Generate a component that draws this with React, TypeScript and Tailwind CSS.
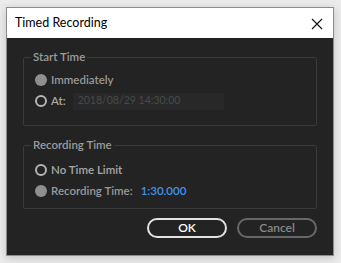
import React from "react";

function Radio({ checked }: { checked: boolean }) {
  return checked ? (
    <span className="w-[12px] h-[12px] rounded-full bg-[#8f8f8f] shrink-0" />
  ) : (
    <span className="w-[12px] h-[12px] rounded-full border-2 border-[#b4b4b4] shrink-0" />
  );
}

export default function App() {
  return (
    <div
      className="w-[341px] h-[263px] bg-[#ebebeb] pt-[7px] pl-[6px] overflow-hidden"
      style={{ fontFamily: 'Lato, "Open Sans", sans-serif' }}
    >
      <div className="w-[328px] h-[249px] flex flex-col border border-[#8c8c8c] shadow-[0_2px_8px_rgba(0,0,0,0.18)]">
        {/* Title bar */}
        <div className="h-[30px] bg-white flex items-center justify-between pl-[8px] pr-[10px] shrink-0">
          <span className="text-[12.5px] text-black">Timed Recording</span>
          <svg width="12" height="12" viewBox="0 0 12 12" className="mt-[1px]">
            <path d="M1 1 L11 11 M11 1 L1 11" stroke="#111" strokeWidth="1.1" />
          </svg>
        </div>

        {/* Body */}
        <div className="flex-1 bg-[#232323] px-[16px] pt-[12px] flex flex-col">
          <fieldset className="border border-[#3a3a3a] rounded-[2px] px-[11px] pt-[6px] pb-[13px]">
            <legend className="px-[2px] ml-[-4px] text-[11.5px] leading-[14px] text-[#9c9c9c] font-semibold">
              Start Time
            </legend>
            <div className="flex flex-col">
              <div className="h-[20px] flex items-center gap-[4px]">
                <Radio checked />
                <span className="text-[11.5px] font-semibold text-[#9a9a9a]">Immediately</span>
              </div>
              <div className="h-[22px] flex items-center gap-[4px]">
                <Radio checked={false} />
                <span className="text-[11.5px] font-semibold text-[#a8a8a8]">At:</span>
                <div className="ml-[3px] w-[151px] h-[17px] bg-[#282828] flex items-center pl-[5px]">
                  <span className="text-[10.5px] text-[#4a4a4a]">2018/08/29 14:30:00</span>
                </div>
              </div>
            </div>
          </fieldset>

          <fieldset className="mt-[12px] border border-[#3a3a3a] rounded-[2px] px-[11px] pt-[7px] pb-[7px]">
            <legend className="px-[2px] ml-[-4px] text-[11.5px] leading-[14px] text-[#9c9c9c] font-semibold">
              Recording Time
            </legend>
            <div className="flex flex-col">
              <div className="h-[21px] flex items-center gap-[4px]">
                <Radio checked={false} />
                <span className="text-[11.5px] font-semibold text-[#a8a8a8]">No Time Limit</span>
              </div>
              <div className="h-[21px] flex items-center gap-[4px]">
                <Radio checked />
                <span className="text-[11.5px] font-semibold text-[#9a9a9a]">Recording Time:</span>
                <span className="ml-[4px] text-[11.5px] font-semibold text-[#4193ea]">1:30.000</span>
              </div>
            </div>
          </fieldset>

          <div className="mt-[9px] flex justify-end gap-[10px]">
            <button className="w-[80px] h-[20px] rounded-full border-2 border-[#e2e2e2] text-[12px] font-semibold text-white flex items-center justify-center">
              OK
            </button>
            <button className="w-[80px] h-[20px] rounded-full border-2 border-[#686868] text-[12px] font-semibold text-[#8a8a8a] flex items-center justify-center">
              Cancel
            </button>
          </div>
        </div>
      </div>
    </div>
  );
}
